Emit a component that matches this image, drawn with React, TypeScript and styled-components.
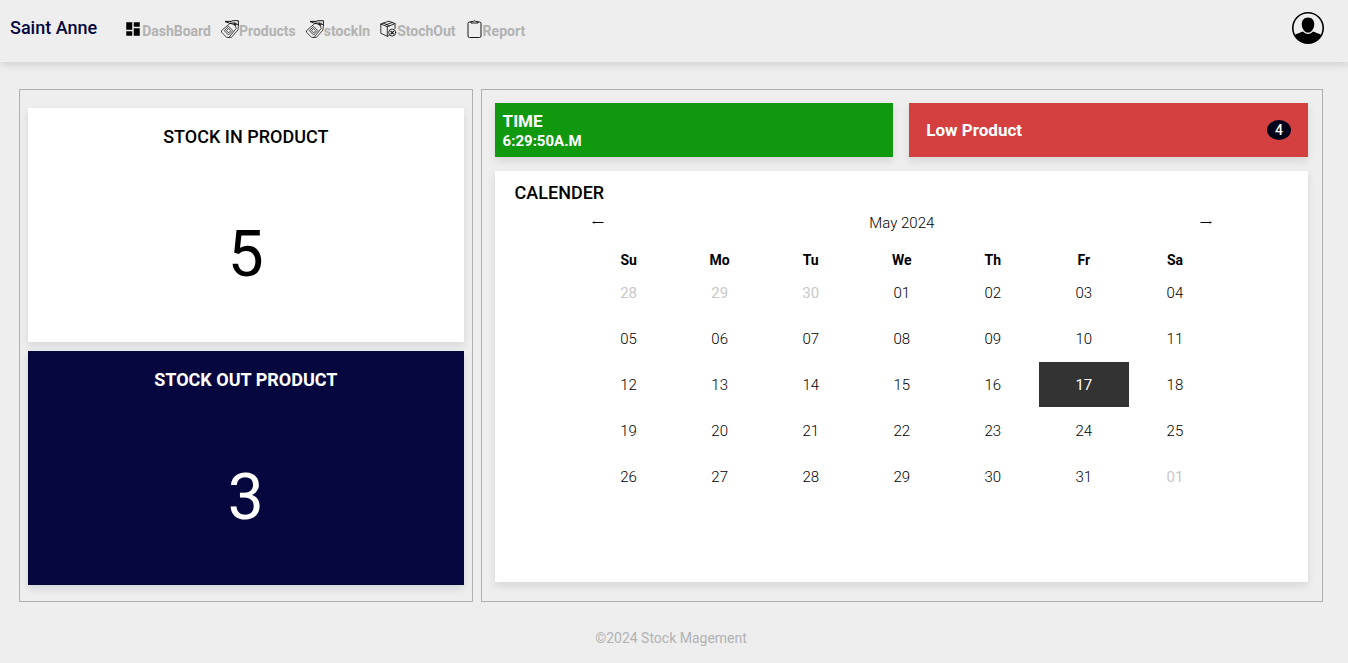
import React from 'react';
import styled, { createGlobalStyle } from 'styled-components';
import { MdDashboard } from 'react-icons/md';

const GlobalStyle = createGlobalStyle`
  *, *::before, *::after { box-sizing: border-box; }
  body {
    margin: 0;
    background: #eeeeee;
    color: #000;
    font-family: Roboto, "Liberation Sans", sans-serif;
    font-size: 14px;
  }
  h1, h2, p { margin: 0; }
  button { font: inherit; color: inherit; border: 0; background: none; padding: 0; cursor: pointer; }
`;

const navy = '#07073f';
const shadow = '0 4px 8px rgba(0, 0, 0, 0.1)';

const Page = styled.div`
  display: flex;
  flex-direction: column;
  min-height: 100vh;
`;

const Header = styled.header`
  display: flex;
  align-items: flex-start;
  height: 62px;
  padding: 12px 24px 0 10px;
  box-shadow: 0 3px 7px rgba(0, 0, 0, 0.12);
`;

const Brand = styled.h1`
  color: ${navy};
  font-size: 18px;
  font-weight: 500;
  line-height: 32px;
  margin-right: 27px;
`;

const Nav = styled.nav`
  display: flex;
  gap: 10px;
  padding-top: 6px;
`;

const NavLink = styled.a`
  display: flex;
  align-items: flex-start;
  color: #b2b2b2;
  font-weight: 700;
  line-height: 26px;
  text-decoration: none;

  svg { flex: none; color: #000; margin-top: 2px; }
`;

const ProfileButton = styled.button`
  margin-left: auto;
  width: 32px;
  height: 32px;

  svg { display: block; }
`;

const Main = styled.main`
  display: grid;
  grid-template-columns: 7fr 13fr;
  gap: 8px;
  margin: 27px 25px 0 19px;
`;

const Panel = styled.section<{ $space: string; $gap: number }>`
  display: flex;
  flex-direction: column;
  gap: ${(p) => p.$gap}px;
  padding: ${(p) => p.$space};
  border: 1px solid #b0b0b0;
`;

const StockCard = styled.article<{ $dark?: boolean }>`
  min-height: 234px;
  padding-top: 16px;
  text-align: center;
  background: ${(p) => (p.$dark ? navy : '#fff')};
  color: ${(p) => (p.$dark ? '#fff' : '#000')};
  box-shadow: ${shadow};
`;

const CardTitle = styled.h2<{ $bold?: boolean }>`
  font-size: 18px;
  font-weight: ${(p) => (p.$bold ? 700 : 500)};
  line-height: 26px;
`;

const StockCount = styled.p`
  margin-top: 67px;
  font-size: 64px;
  line-height: 76px;
`;

const Row = styled.div`
  display: grid;
  grid-template-columns: 1fr 1fr;
  gap: 16px;
`;

const TimeBox = styled.div`
  min-height: 54px;
  padding: 8px 8px 6px;
  background: #10990f;
  color: #fff;
  font-weight: 700;
  box-shadow: ${shadow};
`;

const TimeLabel = styled.h2`
  font-size: 17px;
  font-weight: 700;
  line-height: 20px;
`;

const TimeValue = styled.p`
  font-size: 15px;
  line-height: 20px;
`;

const LowBox = styled.div`
  display: flex;
  align-items: center;
  justify-content: space-between;
  min-height: 54px;
  padding: 0 17px;
  background: #d44040;
  color: #fff;
  box-shadow: ${shadow};
`;

const LowLabel = styled.h2`
  font-size: 17px;
  font-weight: 700;
`;

const Badge = styled.span`
  width: 24px;
  border-radius: 50%;
  background: #020218;
  font-weight: 500;
  line-height: 20px;
  text-align: center;
`;

const CalendarCard = styled.article`
  min-height: 411px;
  padding: 9px 20px;
  background: #fff;
  box-shadow: ${shadow};
`;

const Calendar = styled.div`
  padding: 0 67px 0 68px;
`;

const MonthBar = styled.div`
  display: flex;
  align-items: center;
  justify-content: space-between;
  height: 34px;
  padding: 0 9px;
  font-size: 15px;
  font-weight: 300;
`;

const ArrowButton = styled.button`
  display: flex;
  padding: 6px 0 8px;
`;

const DayTable = styled.table`
  width: 100%;
  margin-top: 9px;
  table-layout: fixed;
  border-spacing: 1px;
  text-align: center;

  th { height: 19px; padding: 0; font-weight: 700; }
  td { padding: 0; }
`;

const Day = styled.button<{ $muted: boolean; $selected: boolean }>`
  display: block;
  width: 100%;
  height: 45px;
  font-size: 15px;
  font-weight: ${(p) => (p.$selected || p.$muted ? 400 : 300)};
  color: ${(p) => (p.$selected ? '#fff' : p.$muted ? '#c8c8c8' : '#000')};
  background: ${(p) => (p.$selected ? '#333' : 'transparent')};
`;

const Footer = styled.footer`
  padding: 26px 6px 14px 0;
  color: #b2b2b2;
  text-align: center;
  line-height: 20px;
`;

const TagIcon = () => (
  <svg width="18" height="18" viewBox="0 0 18 18" fill="none" stroke="currentColor" strokeWidth="0.7" strokeLinejoin="round" strokeLinecap="round" aria-hidden="true">
    <path d="M9.500 3.200 13.500 2.800 15.200 8.500 8 17.400 5.600 17.400 0.500 12.200 0.500 11Z" />
    <path d="M15 3.600 17.400 5 17 10 10.400 17.400H8" />
    <path d="M7.800 6.600 11.800 10.600 7.600 15 3.600 11Z" />
    <path d="M7.800 8.700 9.700 10.600 7.600 12.900 5.700 11Z" />
    <path d="M13.500 4.400C10 3.600 6 2.600 4.400 1.800M4.400 1.400H9.500M9.500 1.600 12 0.700H17.400V5" strokeWidth="0.9" />
    <circle cx="14" cy="4.200" r="1.200" />
  </svg>
);

const BoxIcon = () => (
  <svg width="17" height="18" viewBox="0 0 17 18" fill="none" stroke="currentColor" strokeWidth="0.8" strokeLinejoin="round" strokeLinecap="round" aria-hidden="true">
    <path d="M8.500 15.700 7.300 16.200 0.800 13.300V4L8.800 1.200 15 3.600V8.500" />
    <path d="M0.800 4 7.300 6.700 15 3.600M7.300 6.700V16.200" />
    <path d="M3.300 3.100 9.600 5.800M5.800 4.900 12.300 2.400" />
    <circle cx="12.200" cy="12.600" r="3.500" />
    <path d="m10.900 11.300 2.600 2.600m0-2.600-2.600 2.600" strokeWidth="1.1" />
  </svg>
);

const ClipboardIcon = () => (
  <svg width="17" height="18" viewBox="0 0 17 18" fill="none" stroke="currentColor" strokeLinejoin="round" aria-hidden="true">
    <path d="M5 2H3.500A1.500 1.500 0 0 0 2 3.500V16A1.500 1.500 0 0 0 3.500 17.500H13.500A1.500 1.500 0 0 0 15 16V3.500A1.500 1.500 0 0 0 13.500 2H12" strokeWidth="0.9" />
    <path d="M5 3V1.600H7.200a1.400 1.400 0 0 1 2.600 0H12V3Z" strokeWidth="0.9" />
  </svg>
);

const ProfileIcon = () => (
  <svg width="32" height="32" viewBox="0 0 32 32" aria-hidden="true">
    <circle cx="16" cy="16" r="15.200" fill="none" stroke="#000" strokeWidth="1.600" />
    <path d="M16 5.500c4 0 6.200 2.800 6.200 6.700 0 4.500-2.600 8.300-6.200 8.300s-6.200-3.800-6.200-8.300c0-3.900 2.200-6.700 6.200-6.700Z" />
    <path d="M2.500 23.200c2-1.500 6-2.400 8.500-3.600 1.300 1.600 3 2.500 5 2.500s3.700-.9 5-2.500c2.500 1.200 6.500 2.100 8.500 3.600A15.300 15.300 0 0 1 2.500 23.200Z" />
  </svg>
);

const ArrowIcon = ({ right = false }: { right?: boolean }) => (
  <svg width="12" height="5" viewBox="0 0 12 5" stroke="#000" fill="none" aria-hidden="true">
    <path d="M0.500 2.500H11.500" />
    <path d={right ? 'M9.200 1 11 2.500 9.200 4' : 'M2.800 1 1 2.500 2.800 4'} strokeWidth="0.5" />
  </svg>
);

const links = [
  { label: 'DashBoard', icon: <MdDashboard size={18} aria-hidden="true" /> },
  { label: 'Products', icon: <TagIcon /> },
  { label: 'stockIn', icon: <TagIcon /> },
  { label: 'StochOut', icon: <BoxIcon /> },
  { label: 'Report', icon: <ClipboardIcon /> },
];

const weekdays = ['Su', 'Mo', 'Tu', 'We', 'Th', 'Fr', 'Sa'];

const weeks = Array.from({ length: 5 }, (_, week) =>
  weekdays.map((_, day) => {
    const date = new Date(2024, 3, 28 + week * 7 + day);
    return {
      text: String(date.getDate()).padStart(2, '0'),
      muted: date.getMonth() !== 4,
      selected: date.getMonth() === 4 && date.getDate() === 17,
    };
  }),
);

export default function App() {
  return (
    <Page>
      <GlobalStyle />
      <Header>
        <Brand>Saint Anne</Brand>
        <Nav aria-label="Main">
          {links.map((link) => (
            <NavLink key={link.label} href="#">
              {link.icon}
              {link.label}
            </NavLink>
          ))}
        </Nav>
        <ProfileButton aria-label="Profile">
          <ProfileIcon />
        </ProfileButton>
      </Header>
      <Main>
        <Panel $space="18px 8px 16px" $gap={9}>
          <StockCard>
            <CardTitle>STOCK IN PRODUCT</CardTitle>
            <StockCount>5</StockCount>
          </StockCard>
          <StockCard $dark>
            <CardTitle $bold>STOCK OUT PRODUCT</CardTitle>
            <StockCount>3</StockCount>
          </StockCard>
        </Panel>
        <Panel $space="13px 14px 19px 13px" $gap={14}>
          <Row>
            <TimeBox>
              <TimeLabel>TIME</TimeLabel>
              <TimeValue>6:29:50A.M</TimeValue>
            </TimeBox>
            <LowBox>
              <LowLabel>Low Product</LowLabel>
              <Badge>4</Badge>
            </LowBox>
          </Row>
          <CalendarCard>
            <CardTitle>CALENDER</CardTitle>
            <Calendar>
              <MonthBar>
                <ArrowButton aria-label="Previous month">
                  <ArrowIcon />
                </ArrowButton>
                <span>May 2024</span>
                <ArrowButton aria-label="Next month">
                  <ArrowIcon right />
                </ArrowButton>
              </MonthBar>
              <DayTable>
                <thead>
                  <tr>
                    {weekdays.map((day) => (
                      <th key={day} scope="col">{day}</th>
                    ))}
                  </tr>
                </thead>
                <tbody>
                  {weeks.map((week, i) => (
                    <tr key={i}>
                      {week.map((day) => (
                        <td key={day.text}>
                          <Day $muted={day.muted} $selected={day.selected}>{day.text}</Day>
                        </td>
                      ))}
                    </tr>
                  ))}
                </tbody>
              </DayTable>
            </Calendar>
          </CalendarCard>
        </Panel>
      </Main>
      <Footer>©2024 Stock Magement</Footer>
    </Page>
  );
}
